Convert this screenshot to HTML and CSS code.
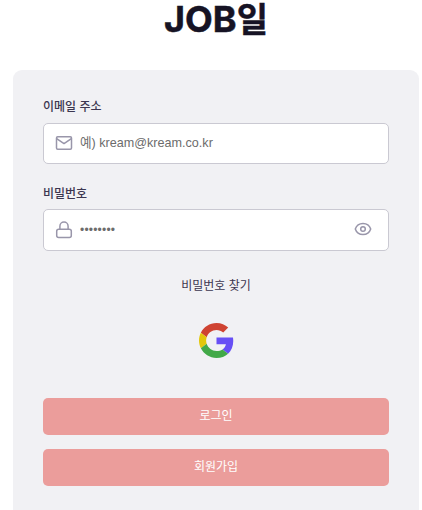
FILE: index.html
```html
<!DOCTYPE html>
<html lang="ko">
<head>
<meta charset="utf-8">
<title>JOB일</title>
<link rel="stylesheet" href="styles.css">
</head>
<body>
<main class="page">
  <h1 class="logo">JOB<span class="logo-ko">일</span></h1>
  <form class="card">
    <label class="label" for="email">이메일 주소</label>
    <div class="field">
      <svg class="icon" viewBox="0 0 18 18"><rect x="1.500" y="2.700" width="15" height="12.600" rx="1.200"/><path d="M2 4.800L9 9.600l7-4.800"/></svg>
      <input class="input" id="email" type="text" placeholder="예) kream@kream.co.kr">
    </div>
    <label class="label label-password" for="password">비밀번호</label>
    <div class="field field-password">
      <svg class="icon" viewBox="0 0 18 18"><rect x="1.700" y="8.200" width="14.600" height="8.300" rx="2"/><path d="M4.900 8V5.200a4.100 4.100 0 0 1 8.200 0V8"/></svg>
      <input class="input dots" id="password" type="text" placeholder="••••••••">
      <svg class="icon eye" viewBox="0 0 18 18"><path d="M1.300 9C2.500 5.400 5.300 3.500 9 3.500s6.500 1.900 7.700 5.500c-1.200 3.600-4 5.500-7.700 5.500S2.500 12.600 1.300 9z"/><circle cx="9" cy="9" r="2.300"/></svg>
    </div>
    <a class="find">비밀번호 찾기</a>
    <svg class="google" viewBox="0 0 48 48">
      <path fill="#cf4332" d="M24 9.500c3.540 0 6.710 1.220 9.210 3.600l6.850-6.850C35.900 2.380 30.470 0 24 0 14.620 0 6.510 5.380 2.560 13.220l7.980 6.190C12.430 13.720 17.740 9.500 24 9.500z"/>
      <path fill="#674ff5" d="M46.980 24.550c0-1.570-.150-3.090-.380-4.550H24v9.020h12.940c-.580 2.960-2.260 5.480-4.780 7.180l7.730 6c4.510-4.180 7.090-10.360 7.090-17.650z"/>
      <path fill="#e2c70b" d="M10.530 28.590c-.480-1.450-.760-2.990-.760-4.590s.270-3.140.760-4.590l-7.980-6.190C.920 16.460 0 20.120 0 24s.920 7.540 2.560 10.780l7.970-6.190z"/>
      <path fill="#42a948" d="M24 48c6.480 0 11.930-2.130 15.890-5.810l-7.730-6c-2.150 1.450-4.920 2.300-8.160 2.300-6.260 0-11.570-4.220-13.470-9.910l-7.980 6.190C6.510 42.620 14.620 48 24 48z"/>
    </svg>
    <button class="button" type="button">로그인</button>
    <button class="button" type="button">회원가입</button>
  </form>
</main>
</body>
</html>
```
FILE: styles.css
```css
* { box-sizing: border-box; }
body {
  margin: 0;
  background: #fff;
  color: #3c3650;
  font-family: "Noto Sans CJK KR", sans-serif;
  font-size: 12px;
}
.page {
  height: 510px;
  padding: 0 3px 0 13px;
}
.logo {
  height: 70px;
  margin: 0;
  color: #161324;
  font: 700 36px/35px Inter, "Noto Sans CJK KR", sans-serif;
  text-align: center;
  -webkit-text-stroke: .5px #161324;
}
.logo-ko {
  font-family: "Noto Sans CJK KR", sans-serif;
  font-size: 34px;
}
.card {
  display: flex;
  flex-direction: column;
  height: 440px;
  padding: 27px 30px 0;
  border-radius: 9px 9px 0 0;
  background: #f1f1f4;
}
.label {
  height: 18px;
  margin-bottom: 8px;
  font-weight: 500;
  line-height: 18px;
}
.label-password { margin: 20px 0 7px; }
.field {
  display: flex;
  align-items: center;
  height: 41px;
  padding: 0 16px 0 11px;
  border: 1px solid #cac9d2;
  border-radius: 5px;
  background: #fff;
}
.field-password { height: 42px; }
.icon {
  flex: none;
  width: 18px;
  height: 18px;
  margin-bottom: 1px;
  fill: none;
  stroke: #9996aa;
  stroke-width: 1.5;
  stroke-linejoin: round;
  stroke-linecap: round;
}
.eye { margin-bottom: 2px; }
.input {
  flex: 1;
  min-width: 0;
  padding: 0 0 1px 7px;
  border: 0;
  outline: 0;
  background: none;
  font: 12.600px/18px "Liberation Sans", "Noto Sans CJK KR", sans-serif;
}
.dots {
  padding-bottom: 0;
  font-size: 12px;
  letter-spacing: .2px;
}
.input::placeholder { color: #6c6c6c; opacity: 1; }
.find {
  height: 18px;
  margin-top: 25px;
  line-height: 18px;
  text-align: center;
}
.google {
  align-self: center;
  flex: none;
  width: 35px;
  height: 35px;
  margin: 29px 0 40px;
}
.button {
  flex: none;
  height: 37px;
  margin: 0 0 14px;
  padding: 0 0 3px;
  border: 0;
  border-radius: 5px;
  background: #eb9d9b;
  color: #fff;
  font: 12px/18px "Noto Sans CJK KR", sans-serif;
}
```
